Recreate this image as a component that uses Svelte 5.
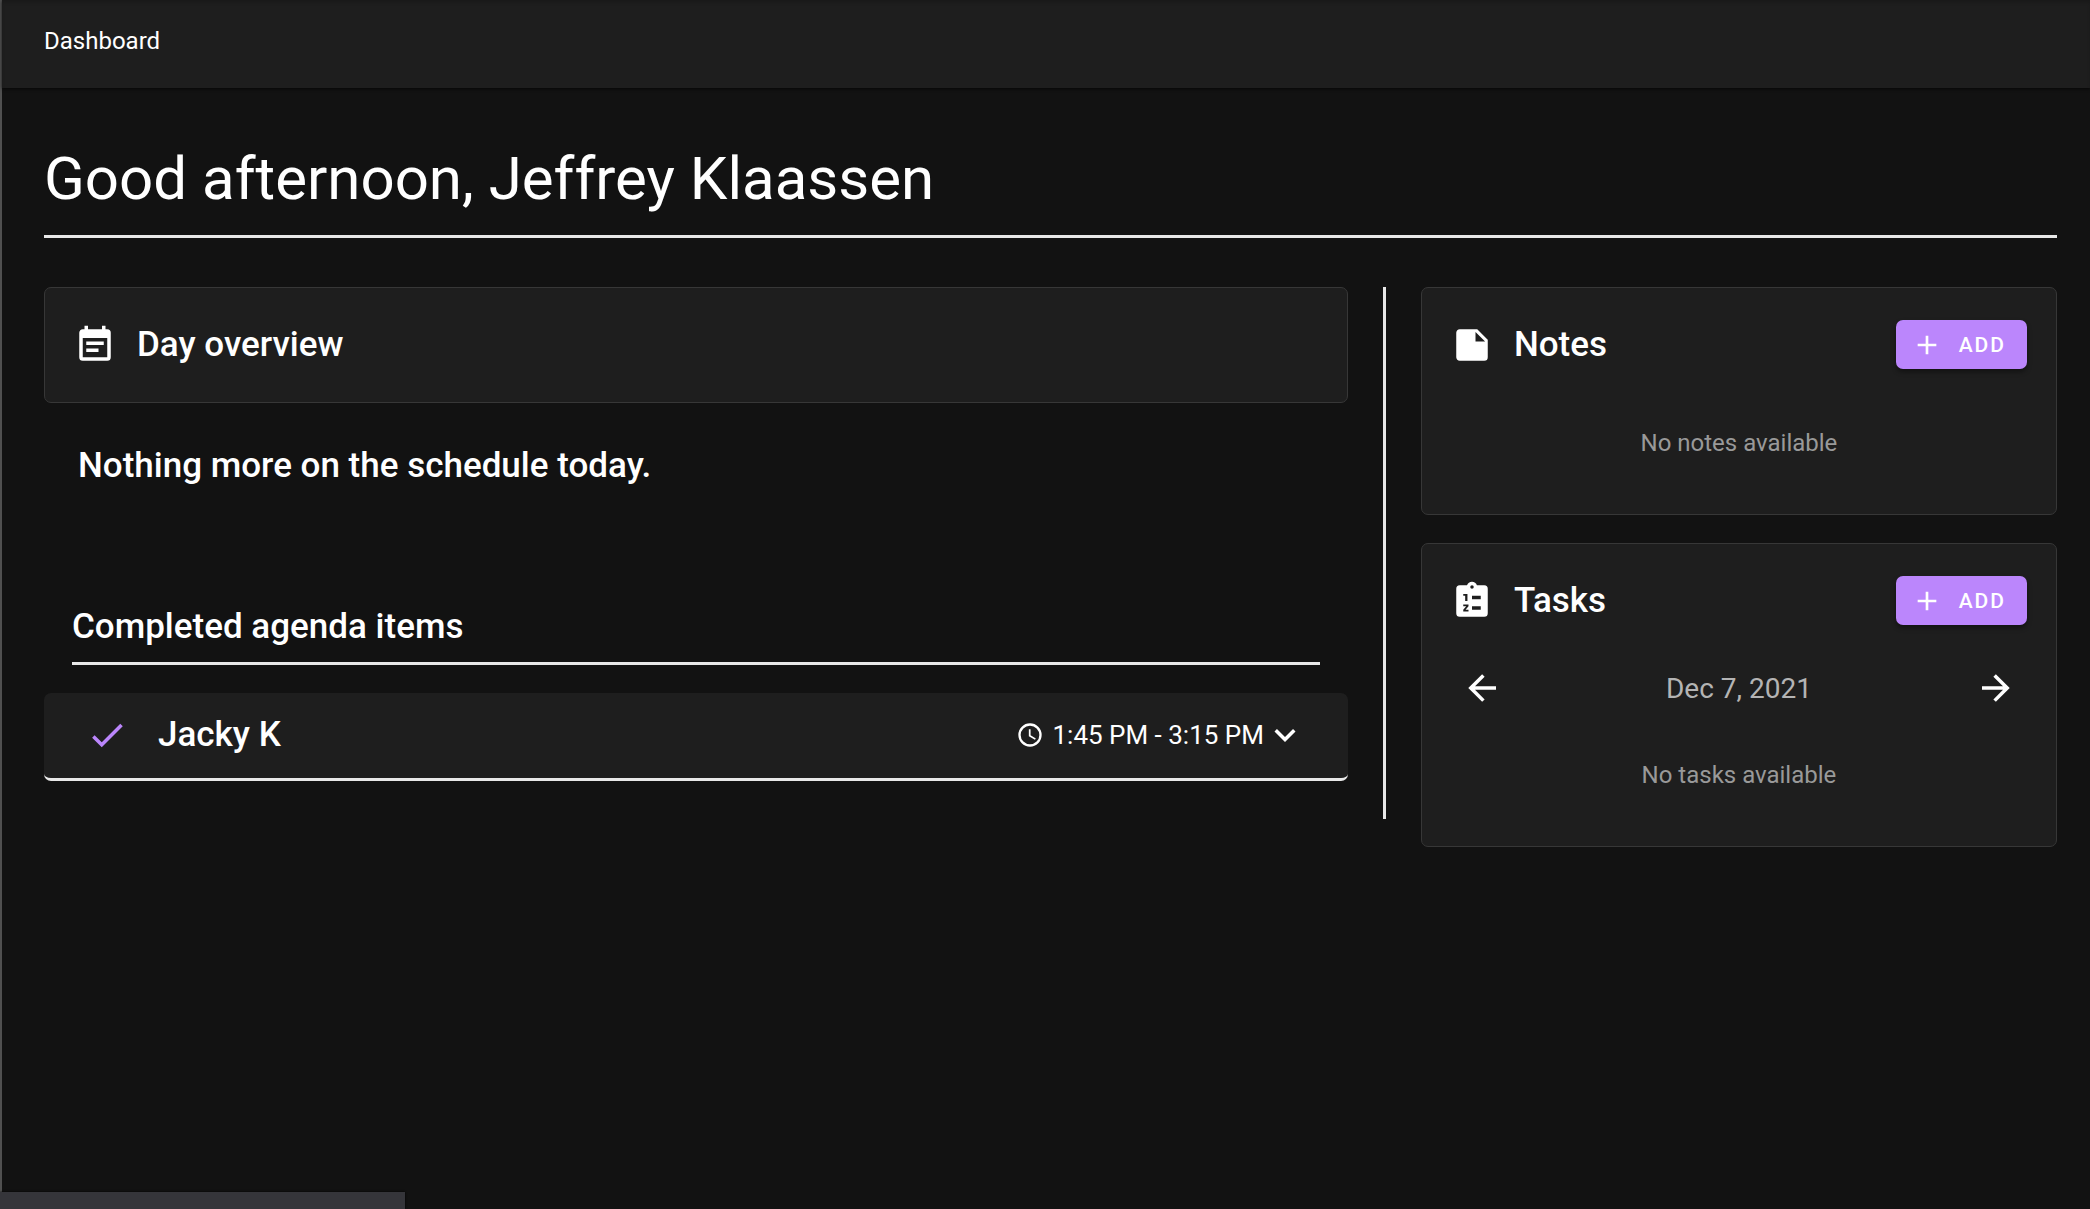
<script>
	// Material Design icon paths, all on a 24x24 grid
	const icons = {
		calendar:
			'M14,14H7V16H14M19,19H5V8H19M19,3H18V1H16V3H8V1H6V3H5C3.89,3 3,3.9 3,5V19A2,2 0 0,0 5,21H19A2,2 0 0,0 21,19V5A2,2 0 0,0 19,3M17,10H7V12H17V10Z',
		note: 'M14,10H19.5L14,4.5V10M5,3H15L21,9V19A2,2 0 0,1 19,21H5C3.89,21 3,20.1 3,19V5C3,3.89 3.89,3 5,3Z',
		tasks:
			'M19,3H14.82C14.4,1.84 13.3,1 12,1C10.7,1 9.6,1.84 9.18,3H5A2,2 0 0,0 3,5V19A2,2 0 0,0 5,21H19A2,2 0 0,0 21,19V5A2,2 0 0,0 19,3M12,3A1,1 0 0,1 13,4A1,1 0 0,1 12,5A1,1 0 0,1 11,4A1,1 0 0,1 12,3M7,8H9.4V12H8.1V9H7V8M7,14H10V15L8.3,17H10V18H7V17L8.7,15H7V14M12,9H17V11H12V9M12,15H17V17H12V15Z',
		plus: 'M19,13H13V19H11V13H5V11H11V5H13V11H19V13Z',
		check: 'M21,7L9,19L3.5,13.5L4.91,12.09L9,16.17L19.59,5.59L21,7Z',
		clock:
			'M12,20A8,8 0 0,0 20,12A8,8 0 0,0 12,4A8,8 0 0,0 4,12A8,8 0 0,0 12,20M12,2A10,10 0 0,1 22,12A10,10 0 0,1 12,22C6.47,22 2,17.5 2,12A10,10 0 0,1 12,2M12.5,7V12.25L17,14.92L16.25,16.15L11,13V7H12.5Z',
		chevron: 'M7.41,8.58L12,13.17L16.59,8.58L18,10L12,16L6,10L7.41,8.58Z',
		left: 'M20,11V13H8L13.5,18.5L12.08,19.92L4.16,12L12.08,4.08L13.5,5.5L8,11H20Z',
		right: 'M4,11V13H16L10.5,18.5L11.92,19.92L19.84,12L11.92,4.08L10.5,5.5L16,11H4Z'
	};

	const user = 'Jeffrey Klaassen';
	const completed = [{ name: 'Jacky K', time: '1:45 PM - 3:15 PM' }];

	let day = $state(new Date(2021, 11, 7));

	let dayLabel = $derived(
		day.toLocaleDateString('en-US', { month: 'short', day: 'numeric', year: 'numeric' })
	);

	function moveDay(step) {
		day = new Date(day.getFullYear(), day.getMonth(), day.getDate() + step);
	}
</script>

{#snippet icon(name, size = '')}
	<svg class="icon {size}" viewBox="0 0 24 24" aria-hidden="true">
		<path d={icons[name]} fill-rule="evenodd" />
	</svg>
{/snippet}

<div class="app">
	<header class="topbar">Dashboard</header>

	<main>
		<h1>Good afternoon, {user}</h1>

		<div class="columns">
			<section class="agenda">
				<div class="card">
					<div class="card-header">
						{@render icon('calendar')}
						<h2>Day overview</h2>
					</div>
				</div>
				<p class="schedule">Nothing more on the schedule today.</p>

				<h2 class="completed-title">Completed agenda items</h2>
				{#each completed as item}
					<button class="agenda-item">
						<span class="check">{@render icon('check')}</span>
						<span class="name">{item.name}</span>
						<span class="time">
							{@render icon('clock', 'small')}
							{item.time}
						</span>
						{@render icon('chevron')}
					</button>
				{/each}
			</section>

			<div class="divider"></div>

			<aside class="side">
				<section class="card">
					<div class="card-header">
						{@render icon('note')}
						<h2>Notes</h2>
						<button class="add">{@render icon('plus', 'medium')}ADD</button>
					</div>
					<p class="empty">No notes available</p>
				</section>

				<section class="card">
					<div class="card-header">
						{@render icon('tasks')}
						<h2>Tasks</h2>
						<button class="add">{@render icon('plus', 'medium')}ADD</button>
					</div>
					<div class="day-nav">
						<button aria-label="Previous day" onclick={() => moveDay(-1)}>
							{@render icon('left')}
						</button>
						<span>{dayLabel}</span>
						<button aria-label="Next day" onclick={() => moveDay(1)}>
							{@render icon('right')}
						</button>
					</div>
					<p class="empty">No tasks available</p>
				</section>
			</aside>
		</div>
	</main>

	<div class="status"></div>
</div>

<style>
	:global(body) {
		background: #121212;
	}

	.app {
		box-sizing: border-box;
		min-height: 100vh;
		border-left: 2px solid #505050;
		background: #121212;
		color: #fff;
		font-family: Roboto, sans-serif;
	}

	.topbar {
		padding: 27px 42px 33px;
		background: #1e1e1e;
		box-shadow: 0 1px 3px rgba(0, 0, 0, 0.7), inset 0 3px 3px rgba(0, 0, 0, 0.15);
		font-size: 24px;
		line-height: 28px;
	}

	main {
		padding: 56px 33px 60px 42px;
	}

	h1,
	h2,
	p {
		margin: 0;
	}

	h1 {
		padding-bottom: 21px;
		border-bottom: 3px solid #e8e8e8;
		font-size: 60px;
		font-weight: 400;
		line-height: 70px;
	}

	h2,
	.schedule,
	.name {
		font-size: 35px;
		font-weight: 500;
		line-height: 42px;
	}

	button {
		border: none;
		background: none;
		color: inherit;
		font-family: inherit;
		cursor: pointer;
	}

	.icon {
		display: block;
		flex: none;
		width: 42px;
		height: 42px;
		fill: currentColor;
	}

	.icon.small {
		width: 28px;
		height: 28px;
	}

	.icon.medium {
		width: 32px;
		height: 32px;
	}

	.columns {
		display: grid;
		grid-template-columns: 41fr 3px 20fr;
		gap: 35px;
		margin-top: 49px;
	}

	.divider {
		margin-bottom: 28px;
		background: #e8e8e8;
	}

	.side {
		display: flex;
		flex-direction: column;
		gap: 28px;
	}

	.card {
		padding: 32px 29px 33px;
		border: 1px solid #373737;
		border-radius: 7px;
		background: #1e1e1e;
	}

	.card-header {
		display: flex;
		align-items: center;
		gap: 21px;
		min-height: 49px;
	}

	.add {
		display: flex;
		align-items: center;
		gap: 16px;
		height: 49px;
		margin-left: auto;
		padding: 0 21px 0 15px;
		border-radius: 7px;
		background: #bb86fc;
		box-shadow: 0 3px 5px rgba(0, 0, 0, 0.4);
		font-size: 21px;
		font-weight: 500;
		letter-spacing: 2px;
	}

	.schedule {
		padding: 42px 34px 0;
	}

	.completed-title {
		margin: 119px 28px 28px;
		padding-bottom: 14px;
		border-bottom: 3px solid #e8e8e8;
	}

	.agenda-item {
		display: flex;
		align-items: center;
		width: 100%;
		padding: 21px 42px 22px;
		border-bottom: 3px solid #e8e8e8;
		border-radius: 7px;
		background: #1e1e1e;
		text-align: left;
	}

	.check {
		margin-right: 30px;
		color: #bb86fc;
	}

	.time {
		display: flex;
		align-items: center;
		gap: 8px;
		margin-left: auto;
		font-size: 26px;
		line-height: 42px;
	}

	.day-nav {
		display: flex;
		align-items: center;
		justify-content: space-between;
		margin-top: 42px;
		padding: 0 10px;
		font-size: 28px;
	}

	.day-nav span {
		color: #b4b4b4;
	}

	.day-nav button {
		padding: 0;
	}

	.empty {
		padding: 52px 0 24px;
		color: #999;
		font-size: 24px;
		line-height: 28px;
		text-align: center;
	}

	.card-header + .empty {
		padding-top: 60px;
	}

	/* link hint in the window's corner */
	.status {
		position: fixed;
		bottom: 0;
		left: 0;
		width: 405px;
		height: 17px;
		background: #35353a;
		box-shadow: 0 0 2px #000;
	}
</style>
